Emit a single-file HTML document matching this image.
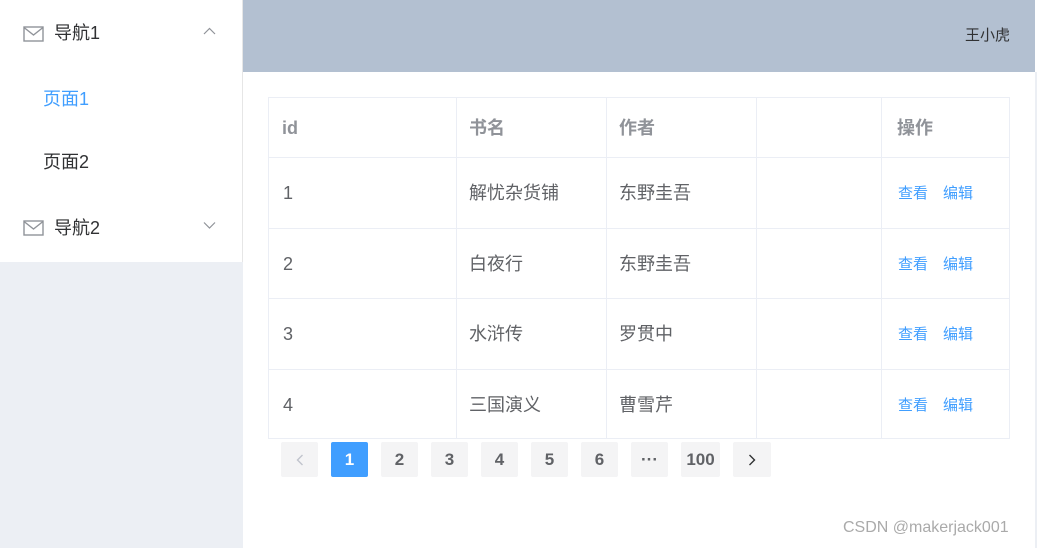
<!DOCTYPE html>
<html><head><meta charset="utf-8"><style>
*{margin:0;padding:0;box-sizing:border-box}
body{width:1037px;height:548px;position:relative;overflow:hidden;background:#fff;font-family:"Liberation Sans","Noto Sans CJK SC",sans-serif;font-size:18px;line-height:20px;color:#303133}
.a{position:absolute}
.side{left:0;top:0;width:243px;height:548px;background:#eceff4}
.menu{left:0;top:0;width:242px;height:262px;background:#fff}
.hdr{left:243px;top:0;width:792px;height:72px;background:#b3c0d1}
.vl{background:#ebeef5;width:1px}
.hl{background:#ebeef5;height:1px}
.th{color:#909399;font-weight:bold;font-size:18px}
.td{color:#606266;font-size:18px}
.lk{color:#409eff;font-size:15px}
.pg{top:442px;width:37px;height:35px;background:#f4f4f5;border-radius:2px;text-align:center;line-height:35px;font-weight:bold;font-size:17px;color:#606266}
.pg svg{margin-top:12px}
</style></head><body>
<div class="a side"></div>
<div class="a menu"></div>
<div class="a" style="left:242px;top:0;width:1px;height:262px;background:#e6e6e6"></div>
<svg class="a" style="left:23px;top:26px" width="21" height="16" viewBox="0 0 21 16"><rect x="1" y="1" width="19" height="14" fill="none" stroke="#909399" stroke-width="1.4"/><path d="M1 1.5 L10.5 9 L20 1.5" fill="none" stroke="#909399" stroke-width="1.4"/></svg>
<div class="a" style="left:54px;top:23px">导航1</div>
<svg class="a" style="left:203px;top:27px" width="13" height="8"><path d="M1 7 L6.5 1.5 L12 7" fill="none" stroke="#909399" stroke-width="1.2"/></svg>
<div class="a" style="left:43px;top:89px;color:#409eff">页面1</div>
<div class="a" style="left:43px;top:152px">页面2</div>
<svg class="a" style="left:23px;top:220px" width="21" height="16" viewBox="0 0 21 16"><rect x="1" y="1" width="19" height="14" fill="none" stroke="#909399" stroke-width="1.4"/><path d="M1 1.5 L10.5 9 L20 1.5" fill="none" stroke="#909399" stroke-width="1.4"/></svg>
<div class="a" style="left:54px;top:218px">导航2</div>
<svg class="a" style="left:203px;top:221px" width="13" height="8"><path d="M1 1.5 L6.5 7 L12 1.5" fill="none" stroke="#909399" stroke-width="1.2"/></svg>
<div class="a hdr"></div>
<div class="a" style="left:965px;top:26px;font-size:15px">王小虎</div>
<div class="a" style="left:1035px;top:72px;width:2px;height:476px;background:#eceff4"></div>
<div class="a hl" style="left:268px;top:97px;width:742px"></div>
<div class="a hl" style="left:268px;top:157px;width:742px"></div>
<div class="a hl" style="left:268px;top:228px;width:742px"></div>
<div class="a hl" style="left:268px;top:298px;width:742px"></div>
<div class="a hl" style="left:268px;top:369px;width:742px"></div>
<div class="a hl" style="left:268px;top:438px;width:742px"></div>
<div class="a vl" style="left:268px;top:97px;height:342px"></div>
<div class="a vl" style="left:456px;top:97px;height:342px"></div>
<div class="a vl" style="left:606px;top:97px;height:342px"></div>
<div class="a vl" style="left:756px;top:97px;height:342px"></div>
<div class="a vl" style="left:881px;top:97px;height:342px"></div>
<div class="a vl" style="left:1009px;top:97px;height:342px"></div>
<div class="a th" style="left:282px;top:118px">id</div>
<div class="a th" style="left:469px;top:118px">书名</div>
<div class="a th" style="left:619px;top:118px">作者</div>
<div class="a th" style="left:897px;top:118px">操作</div>
<div class="a td" style="left:283px;top:183px">1</div><div class="a td" style="left:469px;top:183px">解忧杂货铺</div><div class="a td" style="left:619px;top:183px">东野圭吾</div>
<div class="a td" style="left:283px;top:254px">2</div><div class="a td" style="left:469px;top:254px">白夜行</div><div class="a td" style="left:619px;top:254px">东野圭吾</div>
<div class="a td" style="left:283px;top:324px">3</div><div class="a td" style="left:469px;top:324px">水浒传</div><div class="a td" style="left:619px;top:324px">罗贯中</div>
<div class="a td" style="left:283px;top:395px">4</div><div class="a td" style="left:469px;top:395px">三国演义</div><div class="a td" style="left:619px;top:395px">曹雪芹</div>
<div class="a lk" style="left:898px;top:184px">查看</div><div class="a lk" style="left:943px;top:184px">编辑</div>
<div class="a lk" style="left:898px;top:255px">查看</div><div class="a lk" style="left:943px;top:255px">编辑</div>
<div class="a lk" style="left:898px;top:325px">查看</div><div class="a lk" style="left:943px;top:325px">编辑</div>
<div class="a lk" style="left:898px;top:396px">查看</div><div class="a lk" style="left:943px;top:396px">编辑</div>
<div class="a pg" style="left:281px"><svg width="8" height="12"><path d="M6.5 1 L1.5 6 L6.5 11" fill="none" stroke="#c0c4cc" stroke-width="1.4"/></svg></div>
<div class="a pg" style="left:331px;background:#409eff;color:#fff">1</div>
<div class="a pg" style="left:381px">2</div>
<div class="a pg" style="left:431px">3</div>
<div class="a pg" style="left:481px">4</div>
<div class="a pg" style="left:531px">5</div>
<div class="a pg" style="left:581px">6</div>
<div class="a pg" style="left:631px">···</div>
<div class="a pg" style="left:681px;width:39px">100</div>
<div class="a pg" style="left:733px;width:38px"><svg width="8" height="12"><path d="M1.5 1 L6.5 6 L1.5 11" fill="none" stroke="#303133" stroke-width="1.4"/></svg></div>
<div class="a" style="left:843px;top:518px;font-size:16px;color:#aaa">CSDN @makerjack001</div>
</body></html>
